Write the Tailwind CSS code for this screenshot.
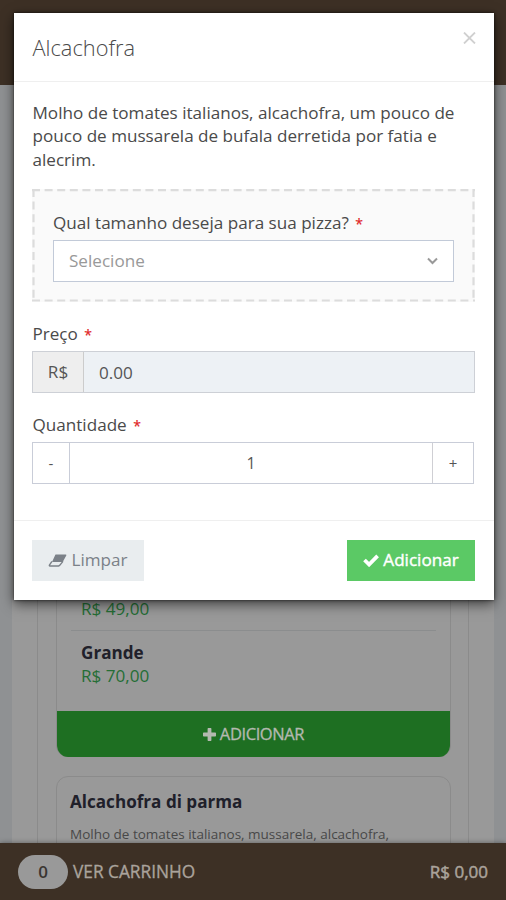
<!DOCTYPE html>
<html lang="pt-BR">
<head>
<meta charset="utf-8">
<title>Alcachofra</title>
<script src="https://cdn.jsdelivr.net/npm/@tailwindcss/browser@4"></script>
</head>
<body class="h-[900px] w-[506px] overflow-hidden bg-[#8f9193] font-['Open_Sans',sans-serif]">
<div class="relative flex h-[900px] flex-col overflow-hidden">
  <header class="h-[85px] shrink-0 bg-[#3d3025]"></header>
  <main class="mx-3 min-h-0 flex-1 overflow-hidden bg-[#999999] px-[25px]">
    <div class="h-[900px] border-x border-[#8b8b8b] pr-[17px] pl-[18px]">
      <article class="flex h-[672px] flex-col justify-end overflow-hidden rounded-b-xl border-x border-[#8b8b8b]">
        <div class="mx-3.5 border-b border-[#8b8d8e] px-[10px] pb-[10px] text-[17.1px] leading-[23px] text-[#256e35]">R$ 49,00</div>
        <div class="mx-3.5 h-[80px] px-[10px] pt-[10px] text-[17.1px] leading-[23px]">
          <h3 class="font-bold text-[#20202a]">Grande</h3>
          <p class="text-[#256e35]">R$ 70,00</p>
        </div>
        <button class="-mx-px flex h-[46px] shrink-0 items-center justify-center gap-1 bg-[#1e6f22] text-[16.5px] tracking-[-0.4px] text-[#b4b9b0]">
          <svg class="size-[13px]" viewBox="0 0 13 13" fill="currentColor"><path d="M5.3 0h2.4q.7 0 .7.7v3.900h3.900q.7 0 .7.7v2.400q0 .7-.7.7H8.400v3.900q0 .7-.7.7H5.300q-.7 0-.7-.7V8.400H.7Q0 8.400 0 7.700V5.300q0-.7.7-.7h3.900V.7q0-.7.7-.7z"/></svg>
          <span class="[-webkit-text-stroke:0.3px]">ADICIONAR</span>
        </button>
      </article>
      <article class="mt-[19px] h-[140px] rounded-t-xl border border-[#8b8b8b] px-[13px] pt-[12px]">
        <h3 class="text-[17.1px] leading-[25px] font-bold text-[#20202a]">Alcachofra di parma</h3>
        <p class="mt-[10px] text-[13.5px] leading-[20px] whitespace-nowrap text-[#484848]">Molho de tomates italianos, mussarela, alcachofra,</p>
      </article>
    </div>
  </main>
  <footer class="relative flex h-[57px] shrink-0 items-center bg-[#3d3025] pt-px pr-[18px] pl-[18px] text-[17.3px] text-[#aaa39c] shadow-[0_0_5px_rgba(0,0,0,0.4)]">
    <span class="flex h-[34px] w-[50px] items-center justify-center rounded-full bg-[#999999] text-[17px] font-semibold text-[#3a3531]">0</span>
    <span class="ml-[5px] [-webkit-text-stroke:0.3px]">VER CARRINHO</span>
    <span class="ml-auto text-[17px] [-webkit-text-stroke:0.5px]">R$ 0,00</span>
  </footer>

  <section class="absolute top-[13px] left-[14px] flex h-[587px] w-[480px] flex-col bg-white text-[17.1px] text-[#4a4a4a] shadow-[0_4px_12px_rgba(0,0,0,0.6),0_0_3px_rgba(0,0,0,0.7)]">
    <div class="flex h-[69px] shrink-0 items-start justify-between border-b border-[#efefef] pt-[20px] pr-[18px] pl-[18.500px]">
      <h2 class="text-[21.8px] leading-[29px] font-light">Alcachofra</h2>
      <svg class="-mt-[1px] h-[12px] w-[13px]" viewBox="0 0 13 12" fill="none" stroke="#d0d0d0" stroke-width="1.800"><path d="M1 .5l11 11M12 .5l-11 11"/></svg>
    </div>
    <div class="flex-1 pt-[19px] pr-[18px] pl-[18px]">
      <p class="pl-[0.5px] leading-[23.300px] whitespace-nowrap">Molho de tomates italianos, alcachofra, um pouco de<br>pouco de mussarela de bufala derretida por fatia e<br>alecrim.</p>
      <div class="relative mt-[18px] h-[113px] w-[443px] bg-[#fafafa] px-[21px] pt-[22px]">
        <svg class="absolute inset-0 h-[113px] w-[443px]" fill="none" stroke="#dcdcdc" stroke-width="2.200"><path stroke-dasharray="8 4.600" d="M0 1.200h443M0 111.500h443M1.500 0v113M441.500 0v113"/></svg>
        <div class="leading-[23px]">Qual tamanho deseja para sua pizza? <span class="ml-[2px] text-[14px] text-[#e02222] [-webkit-text-stroke:0.2px]">*</span></div>
        <div class="mt-[5px] flex h-[42px] w-[401px] items-center justify-between border border-[#c2cad8] bg-white pr-[15px] pl-[15px] text-[#999999]">
          <span>Selecione</span>
          <svg class="h-[8px] w-[11px]" viewBox="0 0 11 8" fill="none" stroke="#999" stroke-width="2"><path d="M1 1.500l4.500 4.500 4.500-4.500"/></svg>
        </div>
      </div>
      <div class="mt-[20px] pl-[0.5px] leading-[23px]">Preço <span class="ml-[2px] text-[14px] text-[#e02222] [-webkit-text-stroke:0.2px]">*</span></div>
      <div class="mt-[5px] flex h-[42px] w-[443px] border border-[#cdd0d6] bg-[#edf1f5]">
        <span class="flex w-[51px] items-center justify-center border-r border-[#cccccc] bg-[#eeeeee] text-[#555555]">R$</span>
        <span class="flex items-center pt-px pl-[15px] text-[#555555]">0.00</span>
      </div>
      <div class="mt-[20px] pl-[0.5px] leading-[23px]">Quantidade <span class="ml-[2px] text-[14px] text-[#e02222] [-webkit-text-stroke:0.2px]">*</span></div>
      <div class="mt-[5px] flex h-[42px] w-[442px] border border-[#c9cdd8] text-[#555555]">
        <span class="flex w-[37px] items-center justify-center border-r border-[#c9cdd8] text-[15px]">-</span>
        <span class="flex flex-1 items-center justify-center text-[16px]">1</span>
        <span class="flex w-[41px] items-center justify-center border-l border-[#cfcfd4] text-[15px]">+</span>
      </div>
    </div>
    <div class="flex h-[80px] shrink-0 items-start justify-between border-t border-[#efefef] px-[18px] pt-[19px]">
      <button class="flex h-[41px] w-[112px] items-center justify-center gap-[4px] bg-[#e9edef] text-[#7b8188]">
        <svg class="h-[13px] w-[19px]" viewBox="0 0 19 13"><path fill="currentColor" d="M7.700.5h10q1 0 .6 1L14.700 8H4l3-6.400q.3-1.100.7-1.100z"/><path fill="none" stroke="currentColor" stroke-width="1.300" d="M3.900 7.500L1.400 11q-.4 1 .5 1h8.600l1.100-.6L15 7.300"/></svg>
        <span class="-mt-px">Limpar</span>
      </button>
      <button class="mr-px flex h-[41px] w-[128px] items-center justify-center gap-[4px] bg-[#5bc965] text-white">
        <svg class="h-[13px] w-[16px]" viewBox="0 0 16 13" fill="none" stroke="currentColor" stroke-width="3.800"><path d="M1.500 6l4.600 4.500 8.500-8.600"/></svg>
        <span class="-mt-px [-webkit-text-stroke:0.4px]">Adicionar</span>
      </button>
    </div>
  </section>
</div>
</body>
</html>
